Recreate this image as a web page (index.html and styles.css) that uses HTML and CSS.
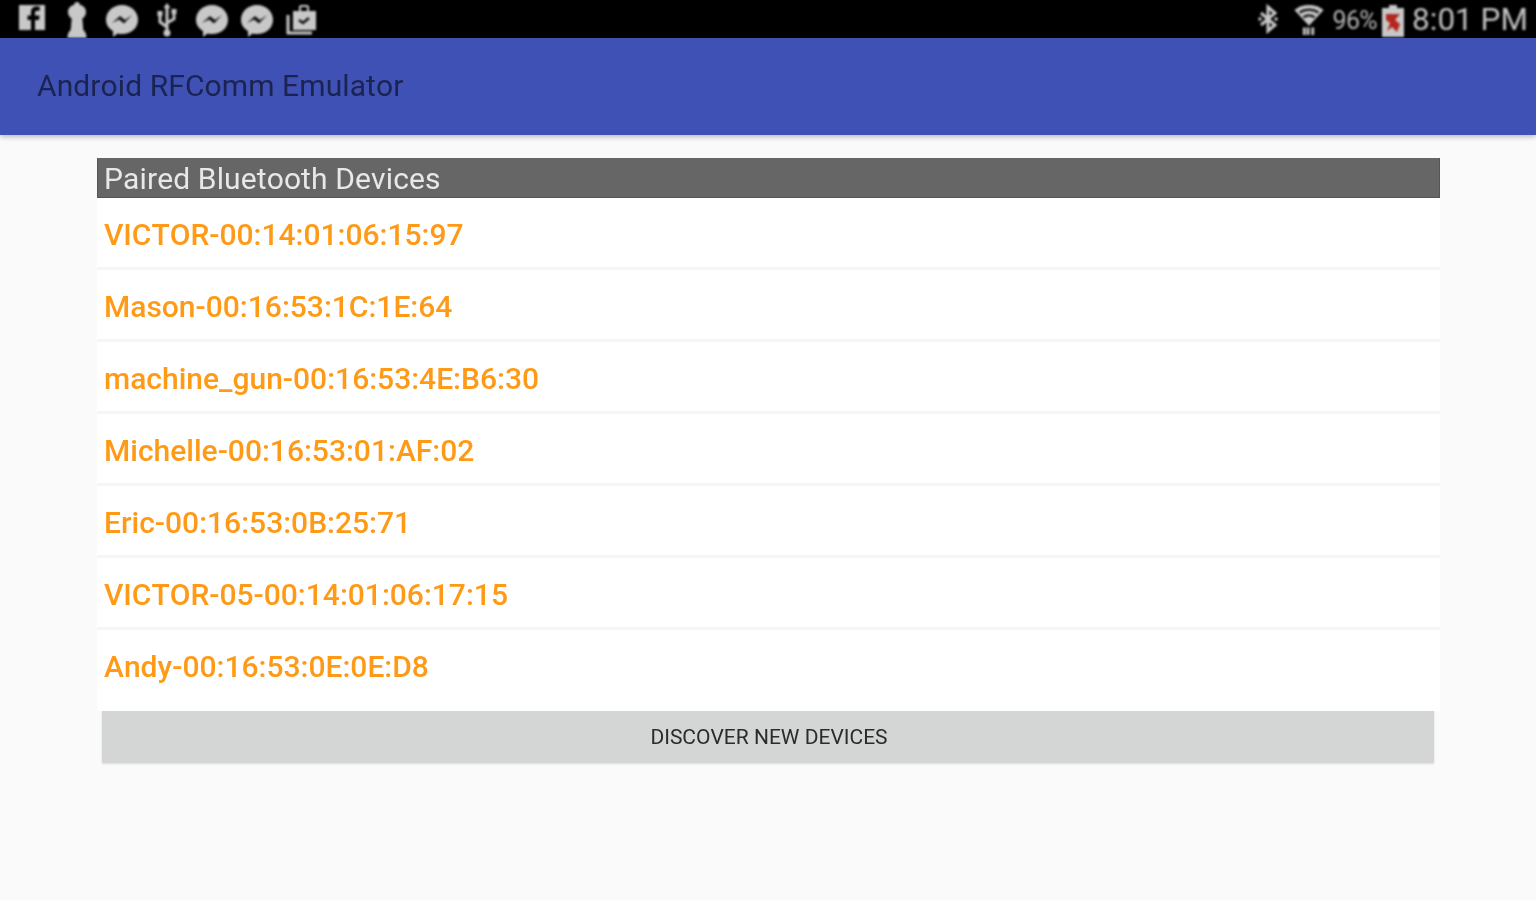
FILE: index.html
```html
<!DOCTYPE html>
<html lang="en">
<head>
<meta charset="utf-8">
<title>Android RFComm Emulator</title>
<link rel="stylesheet" href="styles.css">
</head>
<body>
<div class="screen">
  <header class="status-bar">
    <div class="status-icons">
      <svg class="icon" width="30" height="30" viewBox="0 0 30 30"><path class="g" fill-rule="evenodd" d="M2 3h26v25H2zM18 28v-10h4l.6-4.500H18v-2.800c0-1.200.5-2 2-2h2.700V4.800c-1-.2-2-.2-3-.2-3.500 0-5.700 2-5.700 5.400v3.500H10.500V18H14v10z"/></svg>
      <svg class="icon" width="26" height="36" viewBox="0 0 26 36"><path class="g" d="M13 0c1.800 0 2.800 1.200 2.800 2.800 4 1 6.200 4 6.200 7.200 0 3-1.700 5.400-3.700 6.600l1 11.400c1.500 1.500 3.200 3 3.200 8H3.500c0-5 1.700-6.500 3.200-8l1-11.400C5.700 15.400 4 13 4 10c0-3.200 2.200-6.200 6.200-7.200C10.200 1.200 11.200 0 13 0z"/></svg>
      <svg class="icon" width="36" height="36" viewBox="0 0 36 36"><path class="g" d="M18 3c9 0 16 6.500 16 14.800S27 32 18 32c-1.500 0-3-.2-4.500-.6L9 35v-6C4.500 26.500 2 22.500 2 17.800 2 9.500 9 3 18 3z"/><path class="k" d="M8 21l8-7 5 4 7-5-8 8.500-5-4z"/></svg>
      <svg class="icon" width="26" height="36" viewBox="0 0 26 36"><path class="s" d="M13 5v26M13 25l-7-5v-6M13 21l7-4v-5"/><path class="g" d="M13 1l3.500 5h-7zM3.500 9h5v5h-5zM17.500 7h5v5h-5z"/><circle class="g" cx="13" cy="31" r="3.500"/></svg>
      <svg class="icon" width="36" height="36" viewBox="0 0 36 36"><path class="g" d="M18 3c9 0 16 6.500 16 14.800S27 32 18 32c-1.500 0-3-.2-4.500-.6L9 35v-6C4.500 26.500 2 22.500 2 17.800 2 9.500 9 3 18 3z"/><path class="k" d="M8 21l8-7 5 4 7-5-8 8.500-5-4z"/></svg>
      <svg class="icon" width="36" height="36" viewBox="0 0 36 36"><path class="g" d="M18 3c9 0 16 6.500 16 14.800S27 32 18 32c-1.500 0-3-.2-4.500-.6L9 35v-6C4.500 26.500 2 22.500 2 17.800 2 9.500 9 3 18 3z"/><path class="k" d="M8 21l8-7 5 4 7-5-8 8.500-5-4z"/></svg>
      <svg class="icon" width="34" height="34" viewBox="0 0 34 34"><path class="g" d="M8 9h6V5c0-1 .8-2 2-2h6c1.200 0 2 1 2 2v4h7v19H8zM16 9h6V5h-6z"/><path class="s2" d="M3 13v18h24"/><path class="k2" d="M14 18l4 3 6-5"/></svg>
    </div>
    <div class="status-right">
      <svg class="icon bt" width="24" height="30" viewBox="0 0 24 30"><path class="s" d="M5 9l14 12-7 6V3l7 6L5 21"/><circle class="g" cx="4" cy="15" r="1.800"/><circle class="g" cx="20" cy="15" r="1.800"/></svg>
      <svg class="icon wifi" width="32" height="36" viewBox="0 0 34 36"><path class="g" d="M17 2c6 0 11.500 2 15.500 5.500L17 24 1.500 7.500C5.500 4 11 2 17 2z"/><path class="k2" d="M7 10c6-4 14-4 20 0M11 15c4-2.500 8-2.500 12 0"/><path class="s" d="M12 26v8M16 26v8M21 26v8"/></svg>
      <span class="pct">96%</span>
      <svg class="icon batt" width="22" height="32" viewBox="0 0 22 32"><path class="g" d="M7 0h8v3h7v29H0V3h7z"/><path class="r" d="M4 9h14l-5 6 5 4-3 8-5-5-5 4 3-8-4-3z"/></svg>
      <span class="clock">8:01 PM</span>
    </div>
  </header>
  <div class="app-bar"><h1 class="app-title">Android RFComm Emulator</h1></div>
  <main class="content">
    <h2 class="section-title"><span class="section-label">Paired Bluetooth Devices</span></h2>
    <ul class="device-list">
      <li class="device"><span class="device-label">VICTOR-00:14:01:06:15:97</span></li>
      <li class="device"><span class="device-label">Mason-00:16:53:1C:1E:64</span></li>
      <li class="device"><span class="device-label">machine_gun-00:16:53:4E:B6:30</span></li>
      <li class="device"><span class="device-label">Michelle-00:16:53:01:AF:02</span></li>
      <li class="device"><span class="device-label">Eric-00:16:53:0B:25:71</span></li>
      <li class="device"><span class="device-label">VICTOR-05-00:14:01:06:17:15</span></li>
      <li class="device"><span class="device-label">Andy-00:16:53:0E:0E:D8</span></li>
    </ul>
    <button class="discover" type="button"><span class="discover-label">DISCOVER NEW DEVICES</span></button>
  </main>
</div>
</body>
</html>
```
FILE: styles.css
```css
* { box-sizing: border-box; }
html, body { margin: 0; height: 100%; }
body { background: #fafafa; font-family: Roboto, "Liberation Sans", sans-serif; font-kerning: none; overflow: hidden; }
.screen { width: 1536px; height: 900px; display: flex; flex-direction: column; }
.status-bar { height: 38px; background: #000; display: flex; justify-content: space-between; align-items: flex-start; padding: 2px 8px 0 9px; overflow: hidden; }
.status-icons { display: grid; grid-template-columns: repeat(7, 45px); justify-items: center; filter: blur(1.1px); }
.status-right { display: flex; align-items: flex-start; filter: blur(.9px); }
.icon { display: block; flex: none; }
.g { fill: #c8c8c8; }
.k { fill: #111; }
.r { fill: #b5261c; }
.s { fill: none; stroke: #c8c8c8; stroke-width: 3; }
.s2 { fill: none; stroke: #c8c8c8; stroke-width: 3; }
.k2 { fill: none; stroke: #111; stroke-width: 2.500; }
.pct { color: #b4b4b4; font-size: 25px; line-height: 34px; letter-spacing: -.6px; margin: 2px 5px 0 7px; }
.bt { margin: 2px 13px 0 0; }
.batt { margin-top: 3px; }
.clock { color: #c0c0c0; font-size: 31.500px; line-height: 36px; margin-left: 8px; }
.app-bar { height: 97px; background: #3f51b5; display: flex; align-items: center; padding: 0 0 2px 37px; box-shadow: 0 2px 5px rgba(0,0,0,.25); position: relative; }
.app-title { margin: 0; color: #1b2450; font-size: 30px; font-weight: 400; line-height: 40px; letter-spacing: .09px; filter: blur(.6px); }
.content { width: 1343px; margin: 23px 0 0 97px; display: flex; flex-direction: column; }
.section-title { margin: 0; height: 40px; background: #666; border: 1px solid #555; border-width: 0 1px 1px; color: #e8e8e8; font-size: 30px; font-weight: 400; line-height: 42px; padding-left: 6px; letter-spacing: .12px; overflow: hidden; }
.section-label { display: block; filter: blur(.6px); }
.device-list { list-style: none; margin: 0; padding: 0; background: #fff; }
.device { height: 72px; padding: 17px 0 0 7px; color: #ff9a17; font-size: 30px; font-weight: 500; line-height: 40px; border-bottom: 3px solid #f6f6f6; }
.device:last-child { border-bottom: 0; height: 81px; }
.device-label { display: block; filter: blur(.6px); }
.discover { height: 52px; margin: 0 6px 0 5px; border: 0; background: #d4d5d5; color: #2b2b2b; font: 400 21px Roboto, sans-serif; font-kerning: none; padding: 0 0 0 2px; box-shadow: 0 1px 2px rgba(0,0,0,.12); }
.discover-label { display: block; filter: blur(.6px); }
```
